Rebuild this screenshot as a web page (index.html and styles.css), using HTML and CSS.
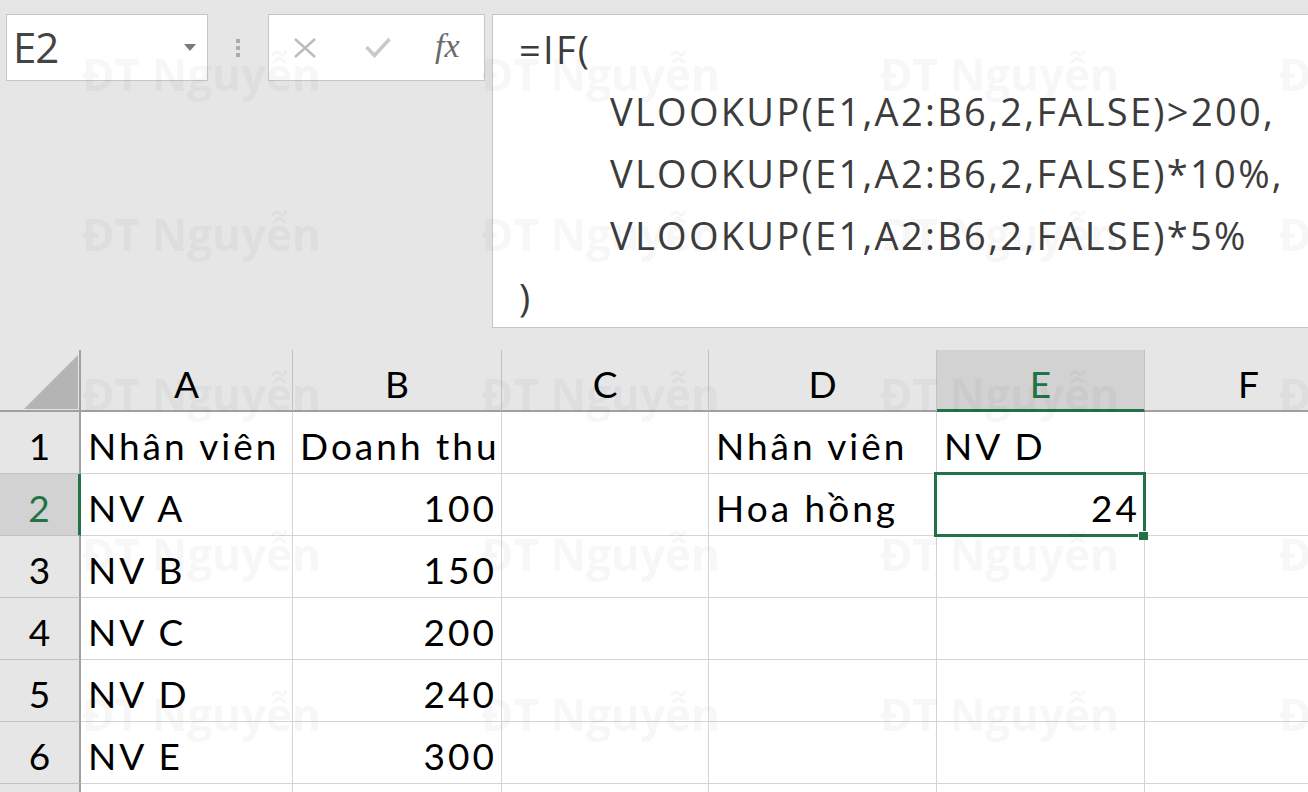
FILE: index.html
```html
<!DOCTYPE html>
<html lang="vi">
<head>
    <meta charset="utf-8">
    <title>Hoa hồng - VLOOKUP</title>
    <link rel="stylesheet" href="styles.css">
</head>
<body>
<div class="window">
    <div class="bar">
        <div class="name-box">
            <span class="name">E2</span>
            <span class="caret"></span>
        </div>
        <div class="grip"><i></i><i></i><i></i></div>
        <div class="actions">
            <svg class="cancel" width="22" height="20" viewBox="0 0 22 20"><path d="M1 1 L21 19 M21 1 L1 19" stroke="#bdbdbd" stroke-width="2.5" fill="none"/></svg>
            <svg class="enter" width="26" height="21" viewBox="0 0 26 21"><path d="M1.5 10 L9.5 18.5 L24.5 2" stroke="#c9c9c9" stroke-width="3.5" fill="none"/></svg>
            <span class="fx">fx</span>
        </div>
        <div class="formula">
            <div class="line">=IF(</div>
            <div class="line indent">VLOOKUP(E1,A2:B6,2,FALSE)&gt;200,</div>
            <div class="line indent">VLOOKUP(E1,A2:B6,2,FALSE)*10%,</div>
            <div class="line indent">VLOOKUP(E1,A2:B6,2,FALSE)*5%</div>
            <div class="line">)</div>
        </div>
    </div>

    <div class="sheet">
        <div class="corner"><span></span></div>
        <div class="col">A</div>
        <div class="col">B</div>
        <div class="col">C</div>
        <div class="col">D</div>
        <div class="col active">E</div>
        <div class="col">F</div>

        <div class="row">1</div>
        <div class="cell">Nhân viên</div>
        <div class="cell">Doanh thu</div>
        <div class="cell"></div>
        <div class="cell">Nhân viên</div>
        <div class="cell">NV D</div>
        <div class="cell"></div>

        <div class="row active">2</div>
        <div class="cell">NV A</div>
        <div class="cell num">100</div>
        <div class="cell"></div>
        <div class="cell">Hoa hồng</div>
        <div class="cell num selected">24</div>
        <div class="cell"></div>

        <div class="row">3</div>
        <div class="cell">NV B</div>
        <div class="cell num">150</div>
        <div class="cell"></div>
        <div class="cell"></div>
        <div class="cell"></div>
        <div class="cell"></div>

        <div class="row">4</div>
        <div class="cell">NV C</div>
        <div class="cell num">200</div>
        <div class="cell"></div>
        <div class="cell"></div>
        <div class="cell"></div>
        <div class="cell"></div>

        <div class="row">5</div>
        <div class="cell">NV D</div>
        <div class="cell num">240</div>
        <div class="cell"></div>
        <div class="cell"></div>
        <div class="cell"></div>
        <div class="cell"></div>

        <div class="row">6</div>
        <div class="cell">NV E</div>
        <div class="cell num">300</div>
        <div class="cell"></div>
        <div class="cell"></div>
        <div class="cell"></div>
        <div class="cell"></div>

        <div class="row"></div>
        <div class="cell"></div>
        <div class="cell"></div>
        <div class="cell"></div>
        <div class="cell"></div>
        <div class="cell"></div>
        <div class="cell"></div>
    </div>

    <div class="watermark">
        <span>ĐT Nguyễn</span><span>ĐT Nguyễn</span><span>ĐT Nguyễn</span><span>ĐT Nguyễn</span>
        <span>ĐT Nguyễn</span><span>ĐT Nguyễn</span><span>ĐT Nguyễn</span><span>ĐT Nguyễn</span>
        <span>ĐT Nguyễn</span><span>ĐT Nguyễn</span><span>ĐT Nguyễn</span><span>ĐT Nguyễn</span>
        <span>ĐT Nguyễn</span><span>ĐT Nguyễn</span><span>ĐT Nguyễn</span><span>ĐT Nguyễn</span>
        <span>ĐT Nguyễn</span><span>ĐT Nguyễn</span><span>ĐT Nguyễn</span><span>ĐT Nguyễn</span>
    </div>
</div>
</body>
</html>
```

FILE: styles.css
```css
:root {
    box-sizing: border-box;
}
:root * {
    box-sizing: inherit;
}
body {
    margin: 0;
    background-color: #E6E6E6;
    overflow: hidden;
}
.window {
    position: relative;
    width: 1308px;
    height: 792px;
    overflow: hidden;
    background-color: #E6E6E6;
}

/* formula bar */
.bar {
    display: flex;
    align-items: flex-start;
    height: 350px;
    padding: 14px 0 0 6px;
    font-family: "Open Sans", "Noto Sans", sans-serif;
}
.name-box {
    display: flex;
    align-items: center;
    justify-content: space-between;
    width: 202px;
    height: 67px;
    padding: 0 11px 0 6px;
    background-color: #FFF;
    border: 1px solid #C6C6C6;
}
.name {
    color: #444;
    font-size: 42px;
    letter-spacing: -1px;
    line-height: 1;
    margin-top: -2px;
}
.caret {
    width: 0;
    height: 0;
    border-left: 6.5px solid transparent;
    border-right: 6.5px solid transparent;
    border-top: 7px solid #7A7A7A;
}
.grip {
    display: flex;
    flex-direction: column;
    align-items: center;
    justify-content: center;
    gap: 3px;
    width: 60px;
    height: 67px;
}
.grip i {
    display: block;
    width: 4px;
    height: 4px;
    background-color: #ABABAB;
}
.actions {
    display: flex;
    align-items: center;
    width: 217px;
    height: 67px;
    background-color: #FFF;
    border: 1px solid #C6C6C6;
}
.cancel {
    margin-left: 25px;
}
.enter {
    margin-left: 49px;
    margin-top: -1px;
}
.fx {
    margin-left: 44px;
    color: #6B6B6B;
    font-family: "Liberation Serif", serif;
    font-size: 34px;
    font-style: italic;
    line-height: 1;
    margin-top: -4px;
}
.formula {
    flex: 1;
    height: 314px;
    margin-left: 7px;
    padding: 3px 0 0 26px;
    background-color: #FFF;
    border: 1px solid #C6C6C6;
    border-right: none;
    color: #3C3C3C;
    font-size: 38px;
    letter-spacing: 2.3px;
    line-height: 62px;
    white-space: nowrap;
}
.indent {
    padding-left: 91px;
}

/* grid */
.sheet {
    display: grid;
    grid-template-columns: 81px 212px 209px 207px 228px 208px 208px;
    grid-auto-rows: 62px;
    width: 1353px;
    font-family: Lato, "Liberation Sans", sans-serif;
    font-size: 37px;
    line-height: 43px;
    color: #000;
}
.corner {
    display: flex;
    align-items: flex-end;
    justify-content: flex-end;
    padding: 0 1px 1px 0;
    border-right: 2px solid #A0A0A0;
    border-bottom: 2px solid #A0A0A0;
}
.corner span {
    width: 54px;
    height: 54px;
    background-color: #B4B4B4;
    clip-path: polygon(100% 0, 100% 100%, 0 100%);
}
.col {
    padding-top: 12px;
    text-align: center;
    border-right: 1px solid #C2C2C2;
    border-bottom: 2px solid #A0A0A0;
}
.col.active {
    background-color: #D2D2D2;
    color: #217346;
    border-bottom: 3px solid #217346;
}
.row {
    padding-top: 12px;
    text-align: center;
    border-right: 2px solid #A0A0A0;
    border-bottom: 1px solid #C2C2C2;
}
.row.active {
    background-color: #D2D2D2;
    color: #217346;
    border-right: 3px solid #217346;
}
.cell {
    padding: 12px 4px 0 7px;
    background-color: #FFF;
    border-right: 1px solid #D4D4D4;
    border-bottom: 1px solid #D4D4D4;
    letter-spacing: 3px;
    white-space: nowrap;
}
.num {
    text-align: right;
}
.selected {
    position: relative;
}
.selected::after {
    content: "";
    position: absolute;
    top: -2px;
    left: -3px;
    right: -2px;
    bottom: -2px;
    border: 3px solid #217346;
}
.selected::before {
    content: "";
    position: absolute;
    right: -4px;
    bottom: -5px;
    width: 9px;
    height: 8px;
    background-color: #217346;
    border-top: 1px solid #FFF;
    border-left: 1px solid #FFF;
    z-index: 1;
}

/* watermark */
.watermark {
    position: absolute;
    top: 0;
    left: 0;
    display: grid;
    grid-template-columns: repeat(4, 399px);
    grid-auto-rows: 160px;
    padding: 44px 0 0 82px;
    color: rgba(0, 0, 0, 0.05);
    font-family: "Open Sans", "Noto Sans", sans-serif;
    font-size: 44px;
    font-weight: 700;
    line-height: normal;
    white-space: nowrap;
    pointer-events: none;
}
```
